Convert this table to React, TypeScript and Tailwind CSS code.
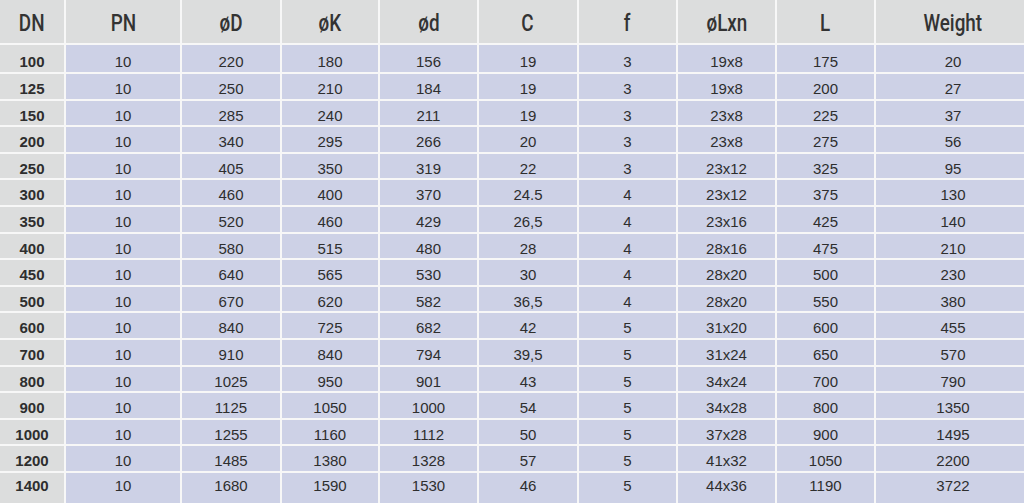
import React from "react";

const headers = ["DN", "PN", "øD", "øK", "ød", "C", "f", "øLxn", "L", "Weight"];

const rows: string[][] = [
  ["100", "10", "220", "180", "156", "19", "3", "19x8", "175", "20"],
  ["125", "10", "250", "210", "184", "19", "3", "19x8", "200", "27"],
  ["150", "10", "285", "240", "211", "19", "3", "23x8", "225", "37"],
  ["200", "10", "340", "295", "266", "20", "3", "23x8", "275", "56"],
  ["250", "10", "405", "350", "319", "22", "3", "23x12", "325", "95"],
  ["300", "10", "460", "400", "370", "24.5", "4", "23x12", "375", "130"],
  ["350", "10", "520", "460", "429", "26,5", "4", "23x16", "425", "140"],
  ["400", "10", "580", "515", "480", "28", "4", "28x16", "475", "210"],
  ["450", "10", "640", "565", "530", "30", "4", "28x20", "500", "230"],
  ["500", "10", "670", "620", "582", "36,5", "4", "28x20", "550", "380"],
  ["600", "10", "840", "725", "682", "42", "5", "31x20", "600", "455"],
  ["700", "10", "910", "840", "794", "39,5", "5", "31x24", "650", "570"],
  ["800", "10", "1025", "950", "901", "43", "5", "34x24", "700", "790"],
  ["900", "10", "1125", "1050", "1000", "54", "5", "34x28", "800", "1350"],
  ["1000", "10", "1255", "1160", "1112", "50", "5", "37x28", "900", "1495"],
  ["1200", "10", "1485", "1380", "1328", "57", "5", "41x32", "1050", "2200"],
  ["1400", "10", "1680", "1590", "1530", "46", "5", "44x36", "1190", "3722"],
];

export default function App() {
  return (
    <div className="w-[1024px] h-[503px] overflow-hidden bg-[#f7f7f7]">
      <div
        className="grid w-[1030px] h-[503px] gap-[2px] grid-cols-[64px_114px_98px_96px_97px_98px_97px_97px_97px_154px] grid-rows-[43px_27px_repeat(15,24.6px)_1fr] text-[#2e2e2e]"
        style={{ fontFamily: '"Liberation Sans", Arial, sans-serif' }}
      >
        {headers.map((h) => (
          <div
            key={h}
            className="bg-[#dcdddd] flex items-center justify-center pt-[3px]"
          >
            <span
              className="inline-block scale-x-[0.82] text-[23px] leading-none font-medium text-[#333333]"
              style={{ fontFamily: 'Roboto, "Liberation Sans", sans-serif' }}
            >
              {h}
            </span>
          </div>
        ))}
        {rows.map((r, i) =>
          r.map((c, j) => (
            <div
              key={i + "-" + j}
              className={
                (j === 0 ? "bg-[#dcdddd] font-bold " : "bg-[#cdd1e6] ") +
                (i === 0 ? "pt-[9px] " : i === 16 ? "pt-[5px] " : "pt-[7px] ") +
                "flex items-start justify-center text-[15px] leading-[15px]"
              }
            >
              {c}
            </div>
          ))
        )}
      </div>
    </div>
  );
}
